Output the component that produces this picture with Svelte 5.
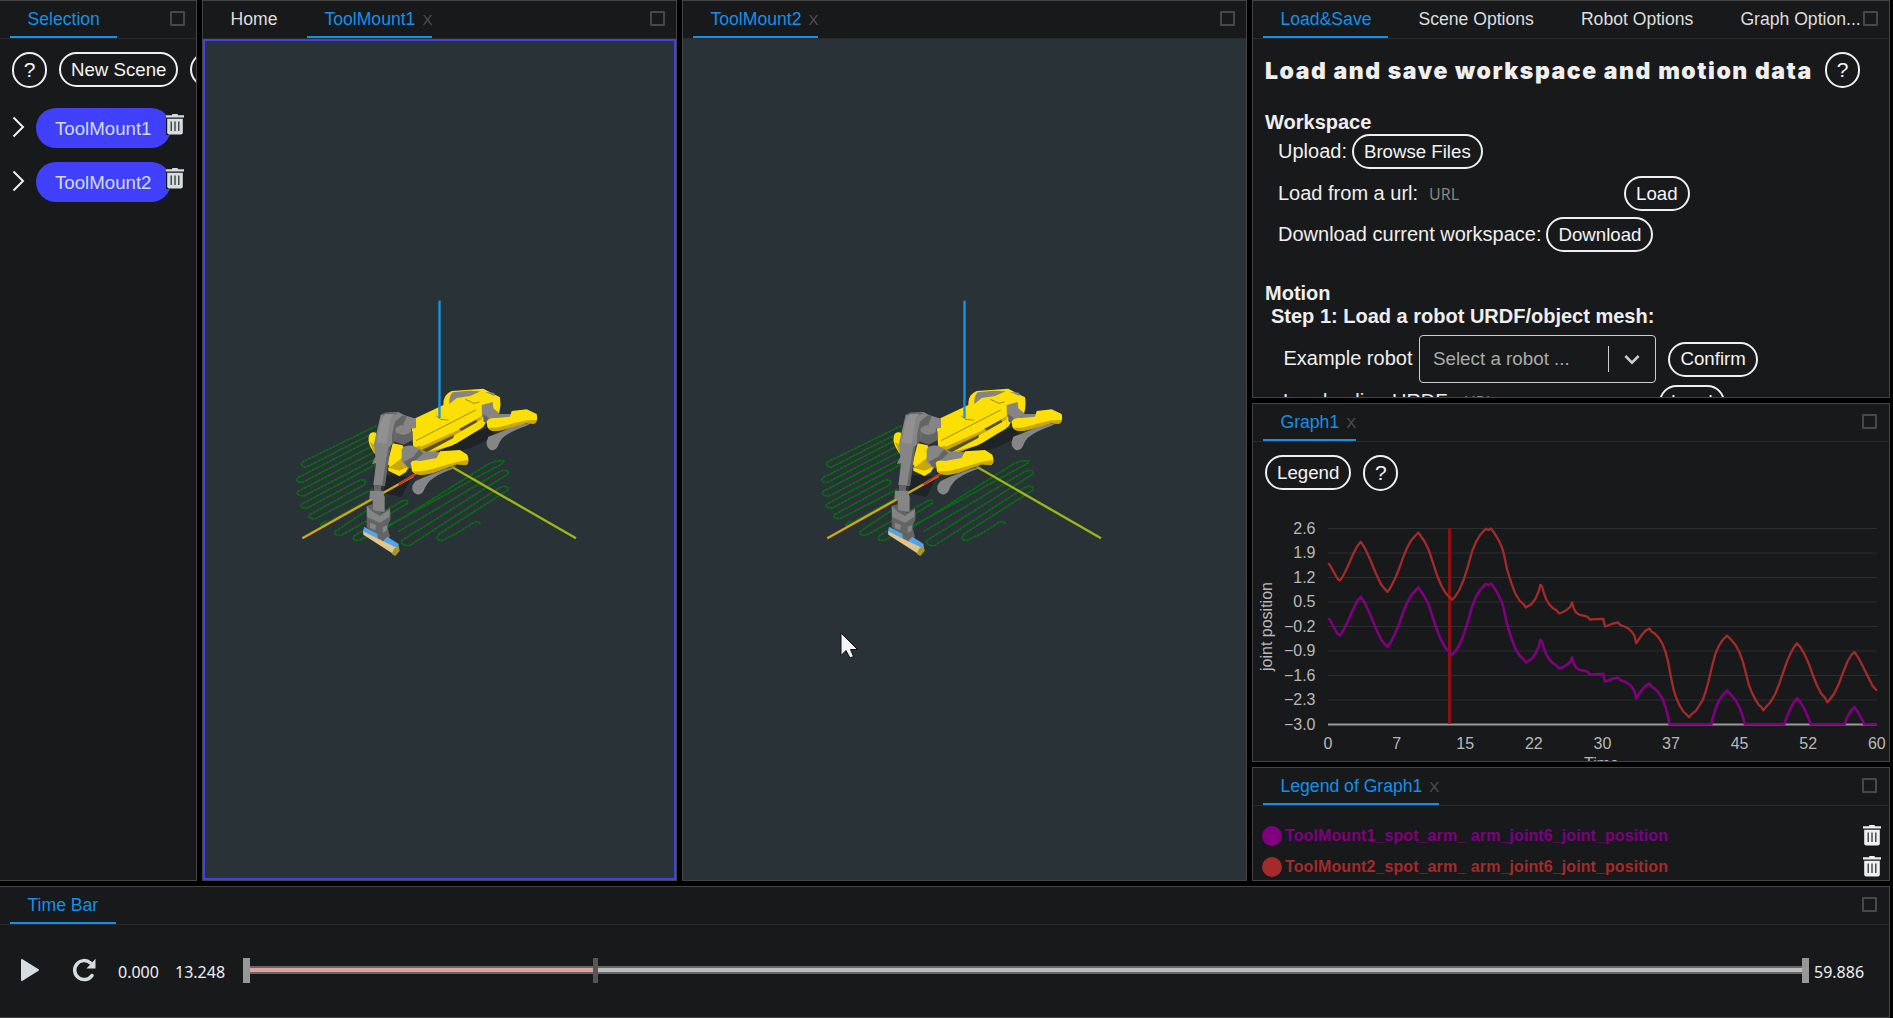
<script>
  const red = [
    [0,192],[4,195],[14,218],[23,238],[28,243],[34,234],[46,205],[60,165],[70,140],[79,127],[88,145],[102,182],[115,222],[128,256],[140,274],[143,277],[150,264],[160,240],[170,210],[180,175],[190,145],[200,122],[210,108],[217,99],[224,112],[232,126],[242,152],[252,190],[262,228],[272,258],[282,280],[290,291],[298,301],[306,290],[316,270],[326,240],[336,200],[346,155],[356,125],[366,105],[374,94],[379,88],[385,92],[391,87],[398,98],[408,118],[418,145],[423,168],[430,210],[440,250],[450,283],[460,303],[470,315],[475,324],[480,320],[488,314],[498,298],[506,275],[510,256],[514,262],[518,280],[524,300],[532,316],[541,327],[549,333],[555,342],[562,339],[572,332],[581,323],[586,309],[590,327],[596,340],[604,346],[615,349],[624,352],[628,360],[645,359],[661,358],[665,381],[672,378],[684,372],[697,369],[702,377],[712,381],[722,388],[730,398],[736,410],[740,431],[746,420],[752,409],[762,394],[772,387],[777,397],[785,403],[794,415],[803,433],[811,460],[817,490],[823,530],[830,572],[837,598],[845,620],[853,636],[860,644],[867,653],[873,644],[883,634],[892,617],[900,600],[907,575],[914,543],[922,500],[930,463],[938,440],[947,422],[958,408],[968,421],[978,436],[988,459],[996,487],[1003,520],[1010,555],[1018,580],[1026,600],[1034,616],[1040,622],[1045,632],[1052,622],[1062,608],[1074,582],[1084,551],[1094,514],[1102,486],[1110,463],[1118,444],[1126,431],[1134,443],[1144,464],[1154,492],[1164,527],[1174,558],[1184,582],[1193,595],[1199,608],[1205,600],[1215,583],[1226,554],[1237,518],[1247,487],[1256,467],[1264,458],[1272,472],[1284,500],[1297,533],[1308,560],[1318,574]
  ];
  const FLOOR = 674;
  const shifted = red.map(([x, y]) => [x, y + 165]);
  // Keep the curve above the axis floor, adding a corner at every crossing.
  const purple = shifted.flatMap(([x, y], i) => {
    const out = [];
    const p = shifted[i - 1];
    if (p && (p[1] - FLOOR) * (y - FLOOR) < 0) {
      const t = (FLOOR - p[1]) / (y - p[1]);
      out.push([p[0] + t * (x - p[0]), FLOOR]);
    }
    out.push([x, Math.min(y, FLOOR)]);
    return out;
  });
  const sx = 549 / 1318;
  const pts = (a) => a.map(([x, y]) => `${(75 + x * sx).toFixed(1)},${((y - 87) / 3 + 19.5).toFixed(1)}`).join(' ');
  const yTicks = ['2.6', '1.9', '1.2', '0.5', '−0.2', '−0.9', '−1.6', '−2.3', '−3.0'];
  const xTicks = ['0', '7', '15', '22', '30', '37', '45', '52', '60'];
  const scenes = ['ToolMount1', 'ToolMount2'];
  const legend = [
    { text: 'ToolMount1_spot_arm_ arm_joint6_joint_position', cls: 'purple' },
    { text: 'ToolMount2_spot_arm_ arm_joint6_joint_position', cls: 'brown' }
  ];
</script>

{#snippet trash()}
  <svg class="trash" viewBox="0 0 18 21" width="18" height="21">
    <path d="M6 1.2C6 .4 6.5 0 7.2 0h3.6c.7 0 1.2.4 1.2 1.2H18V3.6H0V1.2Z" />
    <path d="M1.2 4.8H16.8V18.4Q16.8 20.4 14.8 20.4H3.2Q1.2 20.4 1.2 18.4Z" />
    <path class="slots" d="M5.2 7.4V17M9 7.4V17M12.8 7.4V17" />
  </svg>
{/snippet}

{#snippet robot()}
  <svg class="robot" viewBox="0 0 1017 1077" width="339" height="359">
    <g class="trail">
      <path d="M320 437L100 545Q85 556 108 562L318 455M318 472L84 593Q72 606 98 607L322 490M325 510L84 634Q74 646 102 648L320 535M320 552L96 672Q86 684 112 684L262 604Q284 594 288 606Q284 618 262 626L120 703Q110 716 136 716L310 626" />
      <path d="M152 738L330 640M152 738Q150 730 170 722M345 655L196 754Q188 766 214 766L395 664Q416 655 412 670L252 768Q244 784 270 780L415 705M300 775L655 552Q690 538 702 543Q700 552 670 565L360 735M385 755L690 574Q720 565 714 582L395 782Q394 800 420 796L690 622Q718 614 714 630L510 760Q490 778 515 782L560 760L600 735Q625 715 632 734" />
    </g>
    <path class="shade" d="M455 520L660 440L675 468L600 505L540 520ZM350 585L425 590L395 650L340 640Z" />
    <path class="axis-x" d="M97 775L430 588" />
    <path class="axis-x hot" d="M385 613L440 580" />
    <path class="axis-y" d="M545 560L918 775" />
    <g class="metal">
      <path d="M655 470Q680 462 705 450Q740 432 785 428L770 437Q715 456 697 475Q688 486 684 498Q678 511 664 511Q648 504 650 485Z" />
      <path d="M436 604Q455 594 480 584Q520 566 560 558L545 568Q500 584 478 604Q466 618 461 632Q454 645 440 643Q424 636 427 617Z" />
    </g>
    <path class="yellow" d="M296 470Q300 453 318 458L322 500L330 535L312 518Q292 490 296 470Z" />
    <path class="gold" d="M300 485L322 500L330 535L312 518Z" />
    <path class="yellow" d="M436 415L520 375Q518 344 545 333L640 326L690 352Q694 375 688 398L660 404L640 440L560 490L470 525L430 505L425 440Z" />
    <path class="metal" d="M548 337L595 332L632 334L600 348L560 354L538 372Q536 350 548 337Z" />
    <path class="gold" d="M430 505L560 446L635 402L635 440L545 495L470 525Z" />
    <path class="yellow" d="M430 480L560 425L635 385L635 408L560 452L452 500Z" />
    <path class="yellow" d="M470 515L635 418L634 445L545 497Z" />
    <path class="ink" d="M455 510L552 464L550 474L470 517ZM568 446L618 419L622 426L575 452Z" />
    <path class="seam" d="M438 482L617 390M498 407L512 418L536 420M586 358L612 370L628 366" />
    <path class="gold" d="M372 500L400 498L420 560L408 575L388 588L355 568L360 530Z" />
    <path class="yellow" d="M368 490L398 496L400 530L362 560L352 552ZM355 563L388 572L412 562L408 576L388 588L355 572Z" />
    <g class="metal">
      <path d="M635 375L668 366L670 385L690 402L725 402L725 415L660 425L636 410Z" />
      <path d="M395 510Q400 494 430 497L460 515L508 516L505 535L440 550L410 560L395 545Z" />
      <path d="M645 336L672 338L674 348Z" />
    </g>
    <path class="dark" d="M448 508L460 520L436 542L424 552L424 566L412 560L402 545L430 530ZM640 402L656 414L652 432L640 424Z" />
    <path class="yellow" d="M650 425Q655 412 680 414L720 410L725 393L770 388L800 402Q805 424 792 431L770 428L700 448Q660 460 652 440Z" />
    <path class="gold" d="M655 443Q680 446 725 431L770 421L798 420Q798 429 790 431L770 429L700 450Q668 458 655 443Z" />
    <path class="yellow" d="M422 548Q428 538 450 543L500 534L510 514L570 510L592 524Q600 545 590 554L560 553L490 578Q440 592 426 574Z" />
    <path class="gold" d="M428 574Q455 578 510 560L560 546L594 540Q594 552 588 555L560 553L490 578Q444 592 428 574Z" />
    <path class="metal dark" d="M375 450L412 432L428 455L428 480L400 494L372 484Z" />
    <path class="metal" d="M332 405L345 398L385 396L404 406L438 416L438 444L415 446L400 436L380 455L375 480L362 498L354 520L344 618L310 615L318 550L306 552L316 530L312 490Z" />
    <path class="dark" d="M375 425L398 406L410 408L400 434L378 452L376 480L366 494L366 465ZM355 500L362 498L345 618L336 617ZM332 405L345 398L385 398L372 406Z" />
    <path class="light" d="M345 402L376 401L362 412L350 492L320 488L330 430Z" />
    <ellipse class="metal" cx="400" cy="450" rx="24" ry="14" />
    <path class="dark" d="M312 615L334 617L332 636L312 634Z" />
    <path class="metal" d="M300 632L338 632L344 650L344 695L308 695L308 660L298 655Z" />
    <path class="dark" d="M290 678L308 672L310 690L338 698L360 684L362 716L352 740L360 770L340 785L322 780L300 750L290 740Z" />
    <path class="metal" d="M290 678L308 695L330 708L360 688L358 710L330 728L292 712ZM300 728L318 735L316 750L300 744ZM338 740L352 736L350 752L338 758Z" />
    <path class="blue" d="M282 740L322 762L324 778L279 756ZM342 780L352 770L386 792L384 808L340 795Z" />
    <path class="tan" d="M279 754L386 806L388 812L376 826L280 764Z" />
    <path class="olive" d="M372 806L386 797L389 812L376 828L365 822Z" />
    <path class="axis-z" d="M508.500 62V414" />
  </svg>
{/snippet}

{#snippet closable(name)}
  <div class="tab on">{name}<span class="x">X</span></div>
{/snippet}

<div class="app">
  <div class="upper">
    <section class="panel selection">
      <nav><div class="tab on">Selection</div><i class="max"></i></nav>
      <div class="tools">
        <button class="round">?</button><button>New Scene</button><button class="more" aria-label="More"></button>
      </div>
      {#each scenes as name}
        <div class="row">
          <svg class="chev" viewBox="0 0 14 22" width="14" height="22"><path d="M1.500 1.500L11 11L1.500 20.500" /></svg>
          <span class="pill">{name}</span>
          <span class="del">{@render trash()}</span>
        </div>
      {/each}
    </section>

    <section class="panel view1">
      <nav><div class="tab home">Home</div>{@render closable('ToolMount1')}<i class="max"></i></nav>
      <div class="stage active">{@render robot()}</div>
    </section>

    <section class="panel view2">
      <nav>{@render closable('ToolMount2')}<i class="max"></i></nav>
      <div class="stage">
        {@render robot()}
        <svg class="cursor" viewBox="0 0 18 27" width="18" height="27">
          <path d="M1 1V23.500L6 18.500L10 26L13.500 24.500L10.500 17.500H17.500Z" />
        </svg>
      </div>
    </section>

    <div class="side">
      <section class="panel load">
        <nav>
          <div class="tab on">Load&amp;Save</div>
          <div class="tab">Scene Options</div>
          <div class="tab">Robot Options</div>
          <div class="tab last">Graph Option...</div>
          <i class="max"></i>
        </nav>
        <div class="form">
          <header><h1>Load and save workspace and motion data</h1><button class="round">?</button></header>
          <h2>Workspace</h2>
          <div class="line">Upload:<button>Browse Files</button></div>
          <div class="line url">Load from a url:<span class="ph">URL</span><button>Load</button></div>
          <div class="line">Download current workspace:<button>Download</button></div>
          <h2 class="motion">Motion</h2>
          <h3>Step 1: Load a robot URDF/object mesh:</h3>
          <div class="line pick">
            Example robot
            <div class="select">
              <span>Select a robot ...</span>
              <svg viewBox="0 0 20 20" width="24" height="24"><path d="M4.500 7.500L10 13L15.500 7.500" /></svg>
            </div>
            <button>Confirm</button>
          </div>
          <div class="line urdf"><span>Load online URDF:</span><span class="ph">URL</span><button>Load</button></div>
        </div>
      </section>

      <section class="panel graph">
        <nav>{@render closable('Graph1')}<i class="max"></i></nav>
        <div class="gtools"><button>Legend</button><button class="round">?</button></div>
        <svg class="chart" viewBox="0 0 636 260" width="636" height="260">
          {#each yTicks as t, i}
            <line class="grid" class:base={i === 8} x1="75" x2="624" y1={19.5 + i * 24.5} y2={19.5 + i * 24.5} />
            <text class="end" x="62.5" y={24.500 + i * 24.5}>{t}</text>
          {/each}
          {#each xTicks as t, i}
            <text class="mid" x={75 + i * 68.6} y="239.500">{t}</text>
          {/each}
          <line class="now" x1="196.500" x2="196.500" y1="19" y2="215" />
          <polyline class="s-purple" points={pts(purple)} />
          <polyline class="s-red" points={pts(red)} />
          <text class="mid" transform="translate(19 117.500) rotate(-90)">joint position</text>
          <text class="mid" x="348.500" y="259.500">Time</text>
        </svg>
      </section>

      <section class="panel legend">
        <nav>{@render closable('Legend of Graph1')}<i class="max"></i></nav>
        <div class="items">
          {#each legend as l}
            <div class="item {l.cls}"><i class="dot"></i><b>{l.text}</b>{@render trash()}</div>
          {/each}
        </div>
      </section>
    </div>
  </div>

  <section class="panel time">
    <nav><div class="tab on">Time Bar</div><i class="max"></i></nav>
    <div class="player">
      <svg class="play" viewBox="0 0 20 24" width="20" height="24"><path d="M2 2L18 12L2 22Z" /></svg>
      <svg class="redo" viewBox="0 0 25 24" width="25" height="24"><path d="M20 17.500A9.500 9.500 0 1 1 18.500 5" /><path class="tip" d="M23.500 .8V10.500H14.500Z" /></svg>
      <span class="t0">0.000</span>
      <span class="t1">13.248</span>
      <div class="track">
        <i class="knob"></i><i class="bar done"></i><i class="knob cur"></i><i class="bar rest"></i><i class="knob"></i>
      </div>
      <span class="t2">59.886</span>
    </div>
  </section>
</div>

<style>
  :global(body) { background: #000; overflow: hidden; }
  .app {
    width: 1893px; height: 1018px; box-sizing: border-box; padding-right: 3px; background: #000;
    display: flex; flex-direction: column; gap: 5px; overflow: hidden;
    font: 18.67px/22px "Liberation Sans", Arial, sans-serif; color: #efefef;
  }
  .app :global(*) { box-sizing: border-box; }
  .upper { display: flex; gap: 5px; height: 881px; flex: none; }
  .panel { background: #18191b; border: 1px solid #444; display: flex; flex-direction: column; overflow: hidden; min-width: 0; }
  .selection { width: 197px; border-left: 0; }
  .view1 { width: 475px; }
  .view2 { width: 565px; }
  .side { width: 638px; display: flex; flex-direction: column; gap: 5px; }
  .load { height: 398px; }
  .graph { height: 359px; }
  .legend { height: 114px; }
  .time { flex: 1; border-left: 0; }

  nav { display: flex; flex: none; height: 38px; padding: 0 12px 0 10px; border-bottom: 1px solid #2a2a2c; font-size: 17.6px; align-items: stretch; }
  .tab { padding: 7px 17px 0 17.500px; margin-right: 12.500px; color: #dedede; white-space: nowrap; border-bottom: 2px solid transparent; }
  .tab.on { color: #1590e8; border-color: #1590e8; }
  .tab.last { padding-right: 0; margin-right: 2px; }
  .selection .tab, .time .tab { padding: 7px 17.500px 0; }
  .x { font-size: 15px; color: #505050; margin-left: 7px; margin-right: -17px; padding-right: 0; }
  .max { width: 15px; height: 15px; flex: none; margin: 10px 0 0 auto; border: 2px solid #484848; border-radius: 1px; }
  .view1 .max, .view2 .max, .selection .max { margin-right: -1px; }

  button {
    height: 35px; border: 2px solid #efefef; border-radius: 18px; background: none; color: #f4f4f4; flex: none;
    font: 18.67px/20px "Liberation Sans", Arial, sans-serif; padding: 0 10px; margin: 0; white-space: nowrap;
  }
  .round { width: 35px; height: 36px; padding: 0; font-size: 21px; }
  .tools { display: flex; gap: 12px; padding: 13px 0 0 12px; height: 61px; }
  .more { width: 60px; }
  .row { height: 54px; border-top: 1px solid #151618; display: flex; align-items: center; padding-left: 12px; }
  .chev { fill: none; stroke: #efefef; stroke-width: 2; margin-top: -1px; }
  .pill { margin-left: 10px; width: 135px; height: 40px; border-radius: 20px; background: #4040fb; color: #d3dae6; padding: 10px 19px 0; flex: none; }
  .del { margin: -7px 0 0 -5px; background: #18191b; width: 18px; height: 21px; display: flex; z-index: 1; }
  .trash { fill: #efefef; flex: none; }
  .del .trash { fill: #d6dde0; }
  .slots { stroke: #333; stroke-width: 1.3; }

  .stage { flex: 1; background: #283237; display: flex; align-items: center; justify-content: center; position: relative; }
  .active { border: 2px solid #4141e4; }
  .robot { flex: none; }
  .cursor { position: absolute; left: 157px; top: 593px; fill: #f4f4f4; stroke: #0c0f11; stroke-width: 1; }
  .trail { fill: none; stroke: #0b6a15; stroke-width: 5.500; stroke-dasharray: 10 1.500; }
  .shade { fill: #1d2326; }
  .axis-x, .axis-y, .axis-z { fill: none; stroke-width: 7; stroke: #d5a51c; }
  .hot { stroke: #c23a22; }
  .axis-y { stroke: #9cb716; }
  .axis-z { stroke: #1796e8; }
  .metal { fill: #858585; }
  .light { fill: #919191; }
  .dark, .metal.dark { fill: #646464; }
  .yellow { fill: #fbdf05; }
  .gold { fill: #c9a70c; }
  .ink { fill: #5a5228; }
  .seam { fill: none; stroke: #a58b0a; stroke-width: 3; }
  .blue { fill: #52a5ec; }
  .tan { fill: #e2c48d; }
  .olive { fill: #a59a20; }

  .form { padding: 13px 0 0 12px; display: flex; flex-direction: column; font-size: 20px; }
  header { display: flex; align-items: center; height: 36px; gap: 12px; }
  h1 { margin: 0; padding-top: 2px; font: 900 23px/30px Inter, sans-serif; letter-spacing: 1.550px; white-space: nowrap; width: 548px; }
  h2 { margin: 23px 0 0; font-size: 20px; line-height: 22px; height: 23px; }
  h3 { margin: 0 0 0 6px; font-size: 20px; line-height: 22px; height: 24px; }
  .line { display: flex; align-items: center; gap: 5px; padding: 0 0 2px 13px; height: 35px; margin-bottom: 6px; white-space: nowrap; }
  .line button, .line .select { margin-top: 2px; }
  .line.url { margin: 1px 0 6px; }
  .ph { font: 16px/20px "Noto Sans", sans-serif; color: #858585; margin-left: 6px; padding-top: 2px; width: 190px; }
  h2.motion { margin-top: 24px; }
  .pick { padding-left: 18.500px; height: 48px; margin: 6px 0 0; gap: 6.500px; }
  .select { width: 237px; height: 48px; border: 1px solid #ccc; border-radius: 4px; display: flex; align-items: center; padding-left: 13px; color: #aaa; margin-right: 6px; flex: none; font-size: 18.800px; }
  .select span { width: 176px; height: 26px; line-height: 26px; border-right: 1px solid #ccc; }
  .select svg { margin-left: 11px; fill: none; stroke: #ccc; stroke-width: 2.200; }
  .line.urdf { padding-left: 18px; height: 36px; margin-top: 1px; }

  .gtools { display: flex; gap: 12px; padding: 13px 0 0 12px; height: 67px; flex: none; }
  .chart { flex: none; font: 16px "Liberation Sans", Arial, sans-serif; fill: #b8b8b8; }
  .end { text-anchor: end; }
  .mid { text-anchor: middle; }
  .grid { stroke: #2c2d2f; stroke-width: 1; }
  .base { stroke: #999; stroke-width: 2; }
  .now { stroke: #8c1010; stroke-width: 3; }
  polyline { fill: none; stroke-width: 2.300; stroke-linejoin: round; }
  .s-red { stroke: #a52a2a; }
  .s-purple { stroke: #800080; stroke-width: 2.600; }

  .items { padding: 14px 8px 0 9px; }
  .item { display: flex; align-items: center; height: 31px; font-size: 16px; letter-spacing: .1px; }
  .item b { flex: 1; margin-left: 3px; }
  .dot { width: 20px; height: 20px; border-radius: 50%; background: currentColor; }
  .purple { color: #800080; }
  .brown { color: #a52a2a; }

  .player { display: flex; align-items: center; height: 90px; padding-left: 20px; font: 16px/20px "Noto Sans", sans-serif; }
  .play { fill: #d6dde0; stroke: #d6dde0; stroke-width: 2; stroke-linejoin: round; }
  .redo { margin-left: 32px; fill: none; stroke: #d6dde0; stroke-width: 3.500; stroke-linecap: round; }
  .tip { fill: #d6dde0; stroke: none; }
  .t0 { margin-left: 21px; width: 57px; }
  .t1 { width: 68px; }
  .t0, .t1, .t2 { padding-top: 3px; }
  .track { width: 1566px; display: flex; align-items: center; }
  .knob { width: 7px; height: 25px; background: #979797; }
  .cur { width: 5px; background: #555; }
  .bar { height: 8px; border: 2px solid #686868; border-width: 2px 0; background: #bdbdbd; }
  .done { width: 343px; background: #e0a2a0; }
  .rest { flex: 1; }
  .t2 { margin-left: 5px; }
</style>
